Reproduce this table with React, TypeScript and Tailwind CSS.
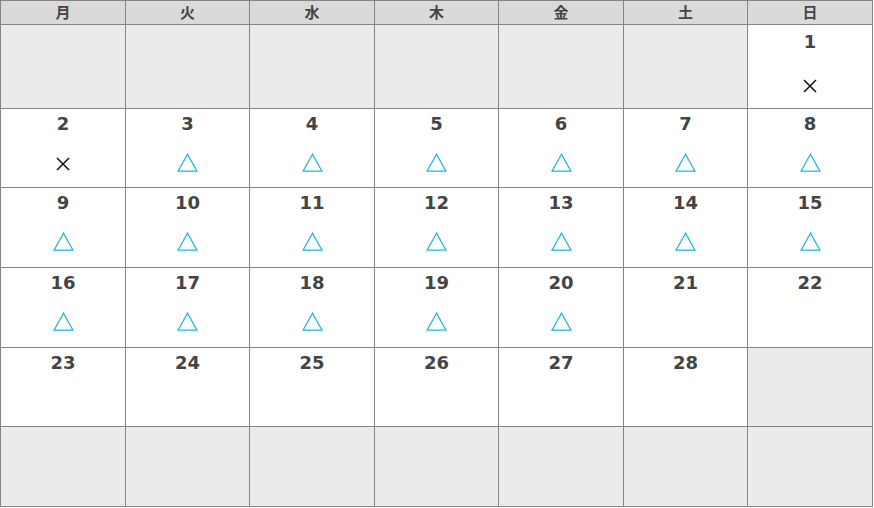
import React from "react";

type Mark = "x" | "tri" | null;

const days = ["月", "火", "水", "木", "金", "土", "日"];

function markFor(d: number): Mark {
  if (d === 1 || d === 2) return "x";
  if (d >= 3 && d <= 20) return "tri";
  return null;
}

function Tri() {
  return (
    <svg width="21" height="19" viewBox="0 0 21 19" className="block">
      <path d="M10.5 1.2 L1 18.2 L20 18.2 Z" fill="none" stroke="#1fb5e8" strokeWidth="1.3" strokeLinejoin="miter" />
    </svg>
  );
}

function Cross() {
  return (
    <svg width="14" height="14" viewBox="0 0 14 14" className="block mt-[4px]">
      <path d="M1 1 L13 13 M13 1 L1 13" stroke="#111" strokeWidth="1.5" />
    </svg>
  );
}

export default function App() {
  const cells: (number | null)[] = [];
  for (let i = 0; i < 6; i++) cells.push(null);
  for (let d = 1; d <= 28; d++) cells.push(d);
  while (cells.length < 42) cells.push(null);

  return (
    <div className="w-[874px] h-[508px] bg-white">
      <div
        className="grid w-[873px] gap-px p-px bg-[#858585] grid-cols-[124px_123px_124px_123px_124px_123px_124px] grid-rows-[23px_83px_78px_79px_79px_78px_79px]"
        style={{ fontFamily: '"DejaVu Sans", Verdana, "Noto Sans CJK JP", sans-serif' }}
      >
        {days.map((d) => (
          <div
            key={d}
            className="bg-[#dadada] flex items-center justify-center text-[15px] font-bold text-[#444]"
            style={{ fontFamily: '"Noto Sans CJK JP", sans-serif' }}
          >
            {d}
          </div>
        ))}
        {cells.map((d, i) => {
          if (d === null) return <div key={i} className="bg-[#ebebeb]" />;
          const m = markFor(d);
          const first = i < 7;
          return (
            <div
              key={i}
              className={`bg-white flex flex-col items-center ${first ? "pt-[6px]" : "pt-[4px]"}`}
            >
              <span className="text-[18px] leading-[22px] font-bold text-[#444]">{d}</span>
              <div className={`h-[19px] flex items-start justify-center ${first ? "mt-[22px]" : "mt-[18px]"}`}>
                {m === "tri" && <Tri />}
                {m === "x" && <Cross />}
              </div>
            </div>
          );
        })}
      </div>
    </div>
  );
}
